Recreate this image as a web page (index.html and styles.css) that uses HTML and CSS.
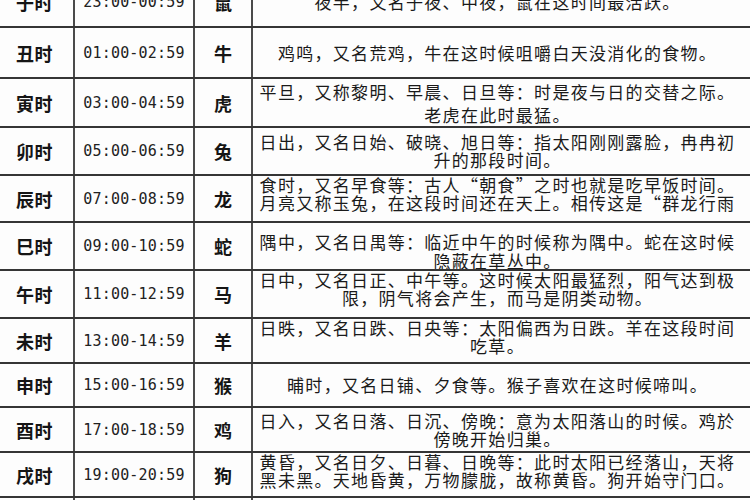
FILE: index.html
```html
<!DOCTYPE html>
<html lang="zh-CN">
<head>
<meta charset="utf-8">
<title>十二时辰</title>
<link rel="stylesheet" href="styles.css">
</head>
<body>
<div class="sheet">
  <div class="table">
    <div class="row r1"><div class="name">子时</div><div class="time">23:00-00:59</div><div class="animal">鼠</div><div class="desc">夜半，又名子夜、中夜，鼠在这时间最活跃。</div></div>
    <div class="row r2"><div class="name">丑时</div><div class="time">01:00-02:59</div><div class="animal">牛</div><div class="desc">鸡鸣，又名荒鸡，牛在这时候咀嚼白天没消化的食物。</div></div>
    <div class="row r3"><div class="name">寅时</div><div class="time">03:00-04:59</div><div class="animal">虎</div><div class="desc wide">平旦，又称黎明、早晨、日旦等：时是夜与日的交替之际。<br>老虎在此时最猛。</div></div>
    <div class="row r4"><div class="name">卯时</div><div class="time">05:00-06:59</div><div class="animal">兔</div><div class="desc">日出，又名日始、破晓、旭日等：指太阳刚刚露脸，冉冉初<br>升的那段时间。</div></div>
    <div class="row r5"><div class="name">辰时</div><div class="time">07:00-08:59</div><div class="animal">龙</div><div class="desc top">食时，又名早食等：古人“朝食”之时也就是吃早饭时间。<br>月亮又称玉兔，在这段时间还在天上。相传这是“群龙行雨</div></div>
    <div class="row r6"><div class="name">巳时</div><div class="time">09:00-10:59</div><div class="animal">蛇</div><div class="desc low">隅中，又名日禺等：临近中午的时候称为隅中。蛇在这时候<br>隐蔽在草丛中。</div></div>
    <div class="row r7"><div class="name">午时</div><div class="time">11:00-12:59</div><div class="animal">马</div><div class="desc top">日中，又名日正、中午等。这时候太阳最猛烈，阳气达到极<br>限，阴气将会产生，而马是阴类动物。</div></div>
    <div class="row r8"><div class="name">未时</div><div class="time">13:00-14:59</div><div class="animal">羊</div><div class="desc top">日昳，又名日跌、日央等：太阳偏西为日跌。羊在这段时间<br>吃草。</div></div>
    <div class="row r9"><div class="name">申时</div><div class="time">15:00-16:59</div><div class="animal">猴</div><div class="desc">晡时，又名日铺、夕食等。猴子喜欢在这时候啼叫。</div></div>
    <div class="row r10"><div class="name">酉时</div><div class="time">17:00-18:59</div><div class="animal">鸡</div><div class="desc">日入，又名日落、日沉、傍晚：意为太阳落山的时候。鸡於<br>傍晚开始归巢。</div></div>
    <div class="row r11"><div class="name">戌时</div><div class="time">19:00-20:59</div><div class="animal">狗</div><div class="desc top">黄昏，又名日夕、日暮、日晚等：此时太阳已经落山，天将<br>黑未黑。天地昏黄，万物朦胧，故称黄昏。狗开始守门口。</div></div>
    <div class="row r12"><div class="name">亥时</div><div class="time">21:00-22:59</div><div class="animal">猪</div><div class="desc">人定，又名定昏等：此时夜色已深，人们也已经停止活动。</div></div>
  </div>
</div>
</body>
</html>
```

FILE: styles.css
```css
html, body {
  margin: 0;
  padding: 0;
  background: #ffffff;
}

.sheet {
  width: 750px;
  height: 500px;
  overflow: hidden;
  background: #fdfdfd;
}

.table {
  display: flex;
  flex-direction: column;
  width: 764px;
  margin-top: -22px;
  margin-left: -4px;
  color: #151515;
  font-family: "Noto Sans CJK SC", "Noto Sans", sans-serif;
}

.row {
  display: grid;
  grid-template-columns: 77px 120px 58px 509px;
  box-sizing: border-box;
  border-bottom: 2px solid #353535;
  flex: none;
}

.r1 { height: 50px; }
.r2 { height: 51px; }
.r3 { height: 49px; }
.r4 { height: 48px; }
.r5 { height: 47px; }
.r6 { height: 48px; }
.r7 { height: 48px; }
.r8 { height: 45px; }
.r9 { height: 44px; }
.r10 { height: 45px; }
.r11 { height: 45px; }
.r12 { height: 48px; }

.row > div {
  display: flex;
  align-items: center;
  justify-content: center;
  overflow: hidden;
  box-sizing: border-box;
}

.time, .animal, .desc {
  border-left: 2px solid #4a4a4a;
}

.name {
  font-size: 18px;
  font-weight: 700;
  letter-spacing: 0.5px;
}

.time {
  font-family: "DejaVu Sans Mono", "Liberation Mono", monospace;
  font-size: 15px;
  letter-spacing: 0.2px;
  color: #222;
}

.animal {
  font-size: 18px;
  font-weight: 700;
}

.desc {
  font-size: 17px;
  line-height: 18px;
  letter-spacing: 1.3px;
  text-align: center;
  white-space: nowrap;
  padding: 0 20px 0 2px;
  color: #1a1a1a;
}

.desc.wide {
  line-height: 23px;
}

.desc.top {
  align-items: flex-start;
  padding-top: 0;
}

.desc.low {
  line-height: 19px;
  padding-top: 10px;
}
```
